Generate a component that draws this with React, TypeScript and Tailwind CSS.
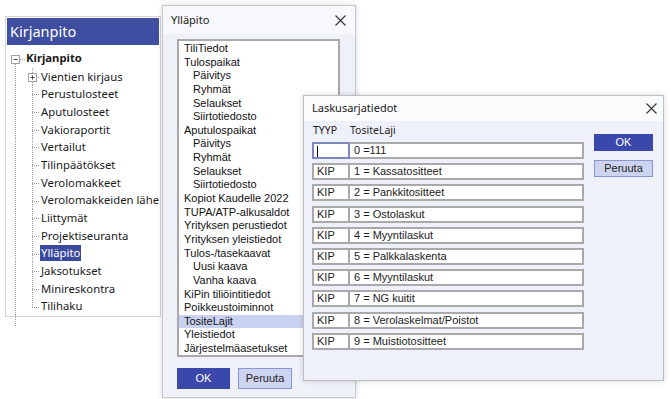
import React from "react";

const treeItems = [
  "Vientien kirjaus",
  "Perustulosteet",
  "Aputulosteet",
  "Vakioraportit",
  "Vertailut",
  "Tilinpäätökset",
  "Verolomakkeet",
  "Verolomakkeiden lähe",
  "Liittymät",
  "Projektiseuranta",
  "Ylläpito",
  "Jaksotukset",
  "Minireskontra",
  "Tilihaku",
];

const listItems: [string, boolean][] = [
  ["TiliTiedot", false],
  ["Tulospaikat", false],
  ["Päivitys", true],
  ["Ryhmät", true],
  ["Selaukset", true],
  ["Siirtotiedosto", true],
  ["Aputulospaikat", false],
  ["Päivitys", true],
  ["Ryhmät", true],
  ["Selaukset", true],
  ["Siirtotiedosto", true],
  ["Kopiot Kaudelle 2022", false],
  ["TUPA/ATP-alkusaldot", false],
  ["Yrityksen perustiedot", false],
  ["Yrityksen yleistiedot", false],
  ["Tulos-/tasekaavat", false],
  ["Uusi kaava", true],
  ["Vanha kaava", true],
  ["KiPin tiliöintitiedot", false],
  ["Poikkeustoiminnot", false],
  ["TositeLajit", false],
  ["Yleistiedot", false],
  ["Järjestelmäasetukset", false],
];

const rows = [
  ["", "0 =111"],
  ["KIP", "1 = Kassatositteet"],
  ["KIP", "2 = Pankkitositteet"],
  ["KIP", "3 = Ostolaskut"],
  ["KIP", "4 = Myyntilaskut"],
  ["KIP", "5 = Palkkalaskenta"],
  ["KIP", "6 = Myyntilaskut"],
  ["KIP", "7 = NG kuitit"],
  ["KIP", "8 = Verolaskelmat/Poistot"],
  ["KIP", "9 = Muistiotositteet"],
];

const segoe = "font-['Noto_Sans','Open_Sans',sans-serif]";
const arial = "font-['Liberation_Sans',Arial,sans-serif]";

const CloseX = () => (
  <svg width="11" height="11" viewBox="0 0 11 11">
    <path d="M0.5 0.5 L10.5 10.5 M10.5 0.5 L0.5 10.5" stroke="#333" strokeWidth="1.1" />
  </svg>
);

const Connector = ({ last, plus }: { last: boolean; plus: boolean }) => (
  <svg width="33" height="17.7" className="shrink-0">
    <line x1="8.5" y1="0" x2="8.5" y2="17.7" stroke="#a0a0a0" strokeDasharray="1 1" />
    <line x1="25.5" y1="0" x2="25.5" y2={last ? 9 : 17.7} stroke="#a0a0a0" strokeDasharray="1 1" />
    <line x1="25" y1="9.5" x2="33" y2="9.5" stroke="#a0a0a0" strokeDasharray="1 1" />
    {plus && (
      <g>
        <rect x="21.5" y="5.5" width="8" height="8" fill="white" stroke="#a0a0a0" />
        <path d="M23.5 9.5 H27.5 M25.5 7.5 V11.5" stroke="#444" />
      </g>
    )}
  </svg>
);

const App = () => {
  return (
    <div className="relative w-[670px] h-[399px] bg-white overflow-hidden">
      {/* left tree panel */}
      <div className="absolute left-[5px] top-[16px] w-[156px] h-[301px] border border-[#d4d4d4] bg-white p-px">
        <div className={`h-[27px] bg-[#3f4ea0] text-white text-[14.5px] leading-[27px] pl-[3px] ${segoe}`}>
          Kirjanpito
        </div>
        <div className={`pt-[5px] text-[11.3px] text-[#1a1a1a] ${segoe}`}>
          <div className="flex items-center h-[17.7px]">
            <svg width="19" height="17.7" className="shrink-0">
              <rect x="4.5" y="5.5" width="8" height="8" fill="white" stroke="#a0a0a0" />
              <path d="M6.5 9.5 H10.5" stroke="#444" />
              <line x1="13" y1="9.5" x2="18" y2="9.5" stroke="#a0a0a0" strokeDasharray="1 1" />
              <line x1="8.5" y1="14" x2="8.5" y2="17.7" stroke="#a0a0a0" strokeDasharray="1 1" />
            </svg>
            <span className="font-bold whitespace-nowrap">Kirjanpito</span>
          </div>
          {treeItems.map((t, i) => (
            <div key={i} className="flex items-center h-[17.7px]">
              <Connector last={i === treeItems.length - 1} plus={i === 0} />
              <span
                className={`whitespace-nowrap leading-[16px] px-px ${
                  t === "Ylläpito" ? "bg-[#3a4a9c] text-white" : ""
                }`}
              >
                {t}
              </span>
            </div>
          ))}
          <svg width="33" height="12" className="block">
            <line x1="8.5" y1="0" x2="8.5" y2="12" stroke="#a0a0a0" strokeDasharray="1 1" />
          </svg>
        </div>
      </div>

      {/* Ylläpito dialog */}
      <div className="absolute left-[162px] top-[5px] w-[194px] h-[393px] border border-[#c6c6c6] bg-[#eef1f8] shadow-[0_0_6px_rgba(0,0,0,0.15)] flex flex-col">
        <div className={`h-[28px] bg-[#f7f8fb] flex items-center justify-between pl-[8px] pr-[9px] text-[11px] text-[#1a1a1a] ${segoe}`}>
          <span>Ylläpito</span>
          <CloseX />
        </div>
        <div className="pl-[14px] pt-[5px]">
          <div className={`w-[163px] h-[318px] border-2 border-[#a9a9a9] bg-white pt-[1px] text-[11px] text-[#111] ${arial}`}>
            {listItems.map(([t, indent], i) => (
              <div
                key={i}
                className={`h-[13.65px] leading-[13.65px] whitespace-nowrap ${indent ? "pl-[14px]" : "pl-[5px]"} ${
                  t === "TositeLajit" ? "bg-[#c9d1f1]" : ""
                }`}
              >
                {t}
              </div>
            ))}
          </div>
          <div className={`flex gap-[8px] mt-[11px] text-[11px] ${arial}`}>
            <div className="w-[53px] h-[21px] bg-[#3a48ab] text-white flex items-center justify-center">OK</div>
            <div className="w-[54px] h-[21px] bg-[#cdd4f0] border border-[#8a96cf] text-[#222] flex items-center justify-center">
              Peruuta
            </div>
          </div>
        </div>
      </div>

      {/* Laskusarjatiedot dialog */}
      <div className="absolute left-[303px] top-[95px] w-[361px] h-[286px] border border-[#bdbdbd] bg-[#eef1f9] shadow-[0_0_6px_rgba(0,0,0,0.15)] flex flex-col">
        <div className={`h-[25px] bg-[#fafbfd] flex items-center justify-between pl-[8px] pr-[6px] text-[11px] text-[#1a1a1a] ${segoe}`}>
          <span>Laskusarjatiedot</span>
          <CloseX />
        </div>
        <div className="flex pl-[8px] pt-[1px]">
          <div className="w-[272px]">
            <div className={`flex h-[18px] items-center text-[10.5px] text-[#222] ${segoe}`}>
              <span className="w-[38px] pl-px">TYYP</span>
              <span>TositeLaji</span>
            </div>
            <div className={`flex flex-col gap-[4.2px] mt-[2px] text-[11px] text-[#222] ${arial}`}>
              {rows.map(([a, b], i) => (
                <div key={i} className="flex h-[17px]">
                  <div
                    className={`w-[38px] h-full border-2 bg-white pl-[3px] leading-[13px] ${
                      i === 0 ? "border-[#7c86c0]" : "border-[#a9a9a9]"
                    }`}
                  >
                    {i === 0 ? <span className="inline-block w-px h-[11px] bg-black align-middle" /> : a}
                  </div>
                  <div className="w-[234px] h-full border-2 border-l-0 border-[#a9a9a9] bg-white pl-[4px] leading-[13px] whitespace-nowrap">
                    {b}
                  </div>
                </div>
              ))}
            </div>
          </div>
          <div className={`ml-[10px] mt-[12px] flex flex-col gap-[9px] text-[11px] ${arial}`}>
            <div className="w-[59px] h-[17px] bg-[#3a48ab] text-white flex items-center justify-center">OK</div>
            <div className="w-[59px] h-[17px] bg-[#cdd4f0] border border-[#8a96cf] text-[#222] flex items-center justify-center">
              Peruuta
            </div>
          </div>
        </div>
      </div>
    </div>
  );
};

export default App;
